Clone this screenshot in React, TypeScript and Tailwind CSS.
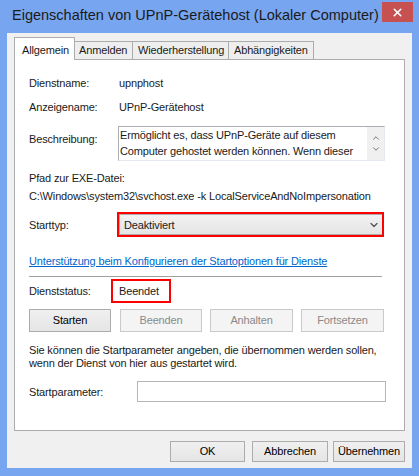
import { ChevronDown, ChevronUp, X } from 'lucide-react';

const font = { fontFamily: '"Liberation Sans", Arial, sans-serif' };

function WinButton({ label, disabled, className }: { label: string; disabled?: boolean; className?: string }) {
  return (
    <div
      className={
        'flex items-center justify-center border text-[11px] ' +
        (disabled
          ? 'border-[#c9c9c9] bg-[#f4f4f4] text-[#8a8a8a] '
          : 'border-[#acacac] bg-gradient-to-b from-[#f0f0f0] to-[#e5e5e5] text-black ') +
        (className ?? '')
      }
    >
      {label}
    </div>
  );
}

function Row({ label, children, className }: { label: string; children: React.ReactNode; className?: string }) {
  return (
    <div className={'flex items-center leading-[16px] ' + (className ?? '')}>
      <div className="w-[90px] shrink-0">{label}</div>
      {children}
    </div>
  );
}

export default function App() {
  return (
    <div className="flex h-[476px] w-[419px] flex-col bg-[#78a5ef] text-[11px] text-black" style={font}>
      {/* title bar */}
      <div className="flex h-[33px] shrink-0 items-start justify-between">
        <div className="pl-[12px] pt-[6px] text-[14.5px] leading-[18px] text-[#1b1b1b]">
          Eigenschaften von UPnP-Gerätehost (Lokaler Computer)
        </div>
        <div className="mr-[6px] mt-[2px] flex h-[20px] w-[31px] items-center justify-center bg-[#c75050]">
          <X size={13} strokeWidth={3} color="white" />
        </div>
      </div>

      {/* client area */}
      <div className="mx-[7px] mb-[8px] flex flex-1 flex-col bg-[#f0f0f0] px-[7px] pt-[4px] tracking-[-0.15px] text-[#1a1a1a]">
        {/* tabs */}
        <div className="flex items-end">
          <div className="relative z-10 -mb-px flex h-[23px] w-[61px] items-start border border-b-0 border-[#acacac] bg-white pl-[7px] pt-[4px]">
            Allgemein
          </div>
          <div className="flex h-[18px] w-[58px] items-center border border-b-0 border-l-0 border-[#acacac] bg-[#eeeeee] pl-[4px]">
            Anmelden
          </div>
          <div className="flex h-[18px] w-[96px] items-center border border-b-0 border-l-0 border-[#acacac] bg-[#eeeeee] pl-[5px]">
            Wiederherstellung
          </div>
          <div className="flex h-[18px] w-[85px] items-center border border-b-0 border-l-0 border-[#acacac] bg-[#eeeeee] pl-[5px]">
            Abhängigkeiten
          </div>
        </div>

        {/* panel */}
        <div className="flex h-[372px] flex-col border border-[#acacac] bg-white pl-[14px] pt-[15px]">
          <Row label="Dienstname:">
            <span>upnphost</span>
          </Row>
          <Row label="Anzeigename:" className="mt-[8px]">
            <span>UPnP-Gerätehost</span>
          </Row>

          <div className="mt-[11px] flex items-start leading-[16px]">
            <div className="mt-[5px] w-[89px] shrink-0">Beschreibung:</div>
            <div className="flex h-[35px] w-[267px] border border-b-[#e3e9ef] border-l-[#abadb3] border-r-[#e3e9ef] border-t-[#abadb3]">
              <div className="flex-1 pl-[1px] leading-[16px]">
                Ermöglicht es, dass UPnP-Geräte auf diesem
                <br />
                Computer gehostet werden können. Wenn dieser
              </div>
              <div className="flex w-[17px] flex-col items-center justify-center gap-[1px] bg-[#f0f0f0]">
                <ChevronUp size={10} strokeWidth={2} color="#606060" />
                <ChevronDown size={10} strokeWidth={2} color="#606060" />
              </div>
            </div>
          </div>

          <div className="mt-[9px] leading-[16px]">Pfad zur EXE-Datei:</div>
          <div className="mt-[2px] leading-[16px]">C:\Windows\system32\svchost.exe -k LocalServiceAndNoImpersonation</div>

          <div className="mt-[8px] flex items-center leading-[16px]">
            <div className="w-[88px] shrink-0">Starttyp:</div>
            <div className="relative flex h-[25px] w-[267px] items-center">
              <div className="ml-[2px] flex h-[21px] w-[267px] items-center justify-between border border-[#acacac] bg-gradient-to-b from-[#f2f2f2] to-[#e5e5e5] pl-[4px] pr-[3px]">
                <span>Deaktiviert</span>
                <ChevronDown size={12} strokeWidth={2.5} color="#555555" />
              </div>
              <div className="absolute inset-0 border-2 border-[#ff0000]" />
            </div>
          </div>

          <div className="mt-[16px] leading-[16px] text-[#0066cc] underline">
            Unterstützung beim Konfigurieren der Startoptionen für Dienste
          </div>

          <div className="mt-[7px] h-px w-[353px] bg-[#a0a0a0]" />

          <div className="mt-[2px] flex items-center leading-[16px]">
            <div className="w-[82px] shrink-0">Dienststatus:</div>
            <div className="flex h-[24px] w-[60px] items-center border-2 border-[#ff0000] pl-[6px]">Beendet</div>
          </div>

          <div className="mt-[6px] flex h-[23px] gap-[8px]">
            <WinButton label="Starten" className="w-[82px]" />
            <WinButton label="Beenden" disabled className="ml-[1px] w-[82px]" />
            <WinButton label="Anhalten" disabled className="w-[83px]" />
            <WinButton label="Fortsetzen" disabled className="w-[83px]" />
          </div>

          <div className="mt-[12px] leading-[13px]">
            Sie können die Startparameter angeben, die übernommen werden sollen,
            <br />
            wenn der Dienst von hier aus gestartet wird.
          </div>

          <div className="mt-[11px] flex items-center leading-[16px]">
            <div className="w-[108px] shrink-0">Startparameter:</div>
            <div className="h-[21px] w-[249px] border border-[#b5b5b5] bg-white" />
          </div>
        </div>

        {/* dialog buttons */}
        <div className="mt-[10px] flex justify-end">
          <WinButton label="OK" className="h-[21px] w-[75px]" />
          <WinButton label="Abbrechen" className="ml-[7px] h-[21px] w-[76px]" />
          <WinButton label="Übernehmen" className="ml-[5px] h-[21px] w-[72px]" />
        </div>
      </div>
    </div>
  );
}
